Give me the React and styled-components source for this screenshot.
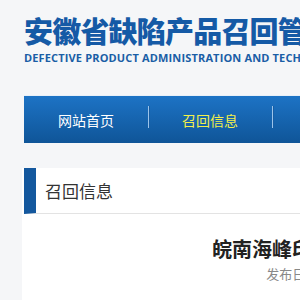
import styled, { createGlobalStyle } from 'styled-components'

const Global = createGlobalStyle`
  html, body {
    margin: 0;
    padding: 0;
    background: #f5f6f8;
    overflow: hidden;
  }
  body {
    font-family: "Noto Sans CJK SC", "Noto Sans", sans-serif;
  }
`

const navItems = [
  { label: '网站首页', active: false },
  { label: '召回信息', active: true },
  { label: '政策法规', active: false },
  { label: '通知公告', active: false },
]

function App() {
  return (
    <>
      <Global />
      <Page>
        <Header>
          <SiteTitle>安徽省缺陷产品召回管理中心</SiteTitle>
          <SiteSub>DEFECTIVE PRODUCT ADMINISTRATION AND TECHNICAL CENTER OF ANHUI</SiteSub>
        </Header>
        <Nav>
          {navItems.map((item) => (
            <NavItem key={item.label} $active={item.active}>
              {item.label}
            </NavItem>
          ))}
        </Nav>
        <Main>
          <SectionHead>
            <SectionTitle>召回信息</SectionTitle>
          </SectionHead>
          <Article>
            <ArticleTitle>皖南海峰印刷有限公司召回部分儿童用品</ArticleTitle>
            <Meta>发布日期：2019-08-12　　浏览次数：1024</Meta>
          </Article>
        </Main>
      </Page>
    </>
  )
}

const Page = styled.div`
  width: 1200px;
  padding-left: 24px;
`

const Header = styled.div`
  height: 95px;
  padding-top: 9px;
  box-sizing: border-box;
`

const SiteTitle = styled.div`
  font-size: 29px;
  line-height: 42px;
  font-weight: 900;
  color: #155aa6;
  letter-spacing: -0.8px;
  white-space: nowrap;
`

const SiteSub = styled.div`
  margin-top: 0;
  font-family: "Open Sans", "Liberation Sans", sans-serif;
  font-size: 11px;
  line-height: 14px;
  font-weight: 700;
  color: #1a5ea6;
  letter-spacing: 0.15px;
  white-space: nowrap;
`

const Nav = styled.div`
  display: flex;
  align-items: center;
  height: 48px;
  box-sizing: border-box;
  border-top: 1px solid #e8f0f8;
  background: linear-gradient(#1d73c5, #0f5598);
`

const NavItem = styled.div`
  position: relative;
  width: 124px;
  text-align: center;
  font-size: 14px;
  color: ${(p) => (p.$active ? '#f2f04a' : '#ffffff')};
  &::after {
    content: '';
    position: absolute;
    right: -1px;
    top: -4px;
    width: 1px;
    height: 22px;
    background: #9cc4ea;
    box-shadow: 1px 0 0 #175da3;
  }
`

const Main = styled.div`
  margin-top: 25px;
  background: #ffffff;
  margin-left: -2px;
  min-height: 200px;
`

const SectionHead = styled.div`
  display: flex;
  align-items: center;
  height: 45px;
  margin-left: 2px;
  border-left: 12px solid #14589e;
  border-bottom: 1px solid #e3e3e3;
`

const SectionTitle = styled.div`
  margin-left: 9px;
  font-size: 17px;
  color: #333333;
`

const Article = styled.div`
  width: 736px;
  margin-left: 2px;
  padding-top: 21px;
  text-align: center;
`

const ArticleTitle = styled.div`
  font-size: 20px;
  line-height: 28px;
  font-weight: 700;
  color: #222222;
  white-space: nowrap;
`

const Meta = styled.div`
  margin-top: 2px;
  font-size: 13px;
  line-height: 18px;
  color: #888888;
  white-space: nowrap;
`

export default App
